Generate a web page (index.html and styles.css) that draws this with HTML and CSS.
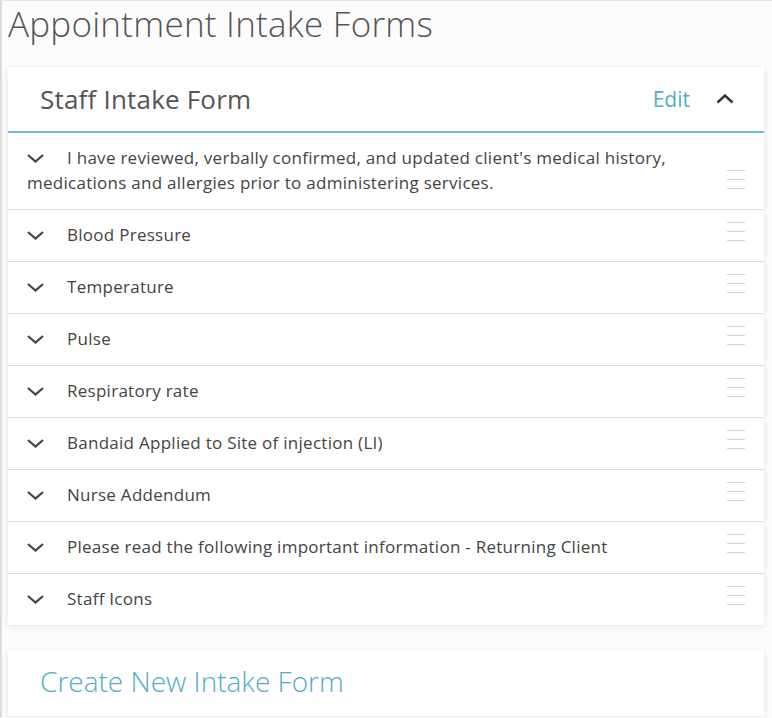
FILE: index.html
```html
<!DOCTYPE html>
<html>
<head>
<meta charset="utf-8">
<link rel="stylesheet" href="styles.css">
</head>
<body>
<div class="page">
  <h1 class="page-title">Appointment Intake Forms</h1>
  <section class="card">
    <header class="card-head">
      <h2 class="card-title">Staff Intake Form</h2>
      <div class="head-actions">
        <span class="edit">Edit</span>
        <svg class="caret-up" width="18" height="10" viewBox="0 0 18 10"><path d="M1.5 8.5 L9 1.5 L16.5 8.5" fill="none" stroke="#333" stroke-width="2.4"/></svg>
      </div>
    </header>
    <ul class="rows">
      <li class="row"><span class="chev"><svg width="17" height="9" viewBox="0 0 17 9"><path d="M1 1 L8.5 7.5 L16 1" fill="none" stroke="#444" stroke-width="2.2"/></svg></span>I have reviewed, verbally confirmed, and updated client's medical history, medications and allergies prior to administering services.<span class="handle"></span></li>
      <li class="row"><span class="chev"><svg width="17" height="9" viewBox="0 0 17 9"><path d="M1 1 L8.5 7.5 L16 1" fill="none" stroke="#444" stroke-width="2.2"/></svg></span>Blood Pressure<span class="handle"></span></li>
      <li class="row"><span class="chev"><svg width="17" height="9" viewBox="0 0 17 9"><path d="M1 1 L8.5 7.5 L16 1" fill="none" stroke="#444" stroke-width="2.2"/></svg></span>Temperature<span class="handle"></span></li>
      <li class="row"><span class="chev"><svg width="17" height="9" viewBox="0 0 17 9"><path d="M1 1 L8.5 7.5 L16 1" fill="none" stroke="#444" stroke-width="2.2"/></svg></span>Pulse<span class="handle"></span></li>
      <li class="row"><span class="chev"><svg width="17" height="9" viewBox="0 0 17 9"><path d="M1 1 L8.5 7.5 L16 1" fill="none" stroke="#444" stroke-width="2.2"/></svg></span>Respiratory rate<span class="handle"></span></li>
      <li class="row"><span class="chev"><svg width="17" height="9" viewBox="0 0 17 9"><path d="M1 1 L8.5 7.5 L16 1" fill="none" stroke="#444" stroke-width="2.2"/></svg></span>Bandaid Applied to Site of injection (LI)<span class="handle"></span></li>
      <li class="row"><span class="chev"><svg width="17" height="9" viewBox="0 0 17 9"><path d="M1 1 L8.5 7.5 L16 1" fill="none" stroke="#444" stroke-width="2.2"/></svg></span>Nurse Addendum<span class="handle"></span></li>
      <li class="row"><span class="chev"><svg width="17" height="9" viewBox="0 0 17 9"><path d="M1 1 L8.5 7.5 L16 1" fill="none" stroke="#444" stroke-width="2.2"/></svg></span>Please read the following important information - Returning Client<span class="handle"></span></li>
      <li class="row last"><span class="chev"><svg width="17" height="9" viewBox="0 0 17 9"><path d="M1 1 L8.5 7.5 L16 1" fill="none" stroke="#444" stroke-width="2.2"/></svg></span>Staff Icons<span class="handle"></span></li>
    </ul>
  </section>
  <section class="card create">
    <span class="create-link">Create New Intake Form</span>
  </section>
</div>
</body>
</html>
```
FILE: styles.css
```css
html, body {
  margin: 0;
  padding: 0;
  background: #fcfcfc;
}
body {
  font-family: "Open Sans", Lato, sans-serif;
  color: #444;
  border-left: 2px solid #dcdcdc;
  border-top: 1px solid #e6e6e6;
  min-height: 717px;
  box-sizing: border-box;
}
.page {
  padding: 0 8px 0 6px;
}
.page-title {
  margin: 0;
  padding: 2px 0 0 0;
  font-size: 35px;
  font-weight: 300;
  letter-spacing: 0.25px;
  color: #555;
  line-height: 42px;
  height: 64px;
}
.card {
  background: #fff;
  box-shadow: 0 1px 6px rgba(0,0,0,0.10);
}
.card-head {
  display: flex;
  align-items: center;
  justify-content: space-between;
  height: 64px;
  padding: 0 30px 0 32px;
  border-bottom: 2px solid #6cc0d2;
}
.card-title {
  margin: 0;
  font-size: 26px;
  font-weight: 400;
  letter-spacing: 0.2px;
  color: #555;
}
.head-actions {
  display: flex;
  align-items: center;
  gap: 26px;
}
.edit {
  color: #55adc3;
  font-size: 21px;
  font-weight: 400;
}
.caret-up {
  display: block;
}
.rows {
  list-style: none;
  margin: 0;
  padding: 0;
}
.row {
  position: relative;
  padding: 12px 60px 14px 19px;
  line-height: 25px;
  font-size: 17px;
  letter-spacing: 0.27px;
  font-weight: 400;
  color: #444;
  border-bottom: 1px solid #dedede;
}
.row.last {
  border-bottom: none;
}
.chev {
  display: inline-block;
  width: 40px;
  box-sizing: border-box;
  vertical-align: middle;
  line-height: 0;
  position: relative;
  top: -1px;
}
.handle {
  position: absolute;
  right: 19px;
  bottom: 20px;
  width: 18px;
  height: 19px;
  background:
    linear-gradient(#d4d4d4, #d4d4d4) 0 0 / 100% 1px no-repeat,
    linear-gradient(#d4d4d4, #d4d4d4) 0 9px / 100% 1px no-repeat,
    linear-gradient(#d4d4d4, #d4d4d4) 0 18px / 100% 1px no-repeat;
}
.create {
  margin-top: 25px;
  height: 62px;
  padding-bottom: 4px;
  display: flex;
  align-items: center;
  padding-left: 32px;
}
.create-link {
  color: #55adc3;
  font-size: 28px;
  font-weight: 300;
}
```
